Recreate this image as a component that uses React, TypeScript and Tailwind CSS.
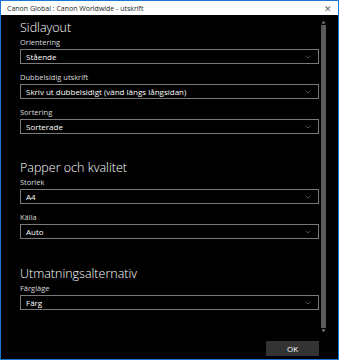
import { ChevronDown } from 'lucide-react';

const font = { fontFamily: '"Open Sans", "Noto Sans", sans-serif' };

function Select({ value }: { value: string }) {
  return (
    <div className="h-[15px] w-[299px] border border-[#7a7a7a] flex items-center justify-between pl-[5px] pr-[6px]">
      <span className="text-[8px] leading-none text-white">{value}</span>
      <ChevronDown size={8} strokeWidth={1.5} className="text-[#9a9a9a]" />
    </div>
  );
}

function Field({ label, value, first }: { label: string; value: string; first?: boolean }) {
  return (
    <div className={first ? 'mt-[1px]' : 'mt-[8px]'}>
      <div className="text-[7.5px] leading-[10px] text-[#dcdcdc] h-[10px]">{label}</div>
      <div className="mt-[2px]">
        <Select value={value} />
      </div>
    </div>
  );
}

function Heading({ children, top }: { children: string; top: string }) {
  return <h2 className={`${top} text-[12.5px] leading-[16px] font-light text-white`}>{children}</h2>;
}

export default function App() {
  return (
    <div style={font} className="w-[339px] h-[360px] border border-[#1a78d0] bg-black flex flex-col overflow-hidden">
      {/* title bar */}
      <div className="h-[14px] bg-white flex items-center justify-between pl-[6px] pr-[6px] shrink-0">
        <span className="text-[7px] text-[#222] leading-none">Canon Global : Canon Worldwide - utskrift</span>
        <span className="text-[9px] text-[#666] leading-none">✕</span>
      </div>

      <div className="flex-1 flex">
        <div className="pl-[19px] pt-[5px] w-[318px] shrink-0 flex flex-col">
          <Heading top="">Sidlayout</Heading>
          <Field first label="Orientering" value="Stående" />
          <Field label="Dubbelsidig utskrift" value="Skriv ut dubbelsidigt (vänd längs långsidan)" />
          <Field label="Sortering" value="Sorterade" />

          <Heading top="mt-[26px]">Papper och kvalitet</Heading>
          <Field first label="Storlek" value="A4" />
          <Field label="Källa" value="Auto" />

          <Heading top="mt-[27px]">Utmatningsalternativ</Heading>
          <Field first label="Färgläge" value="Färg" />

          <div className="mt-auto mb-[3px] flex justify-end">
            <button className="w-[53px] h-[15px] bg-[#333333] text-white text-[8px] leading-none">OK</button>
          </div>
        </div>

        {/* scrollbar */}
        <div className="ml-[2px] mt-[5px] mb-[26px] w-[5px] flex flex-col items-center">
          <svg width="5" height="4" viewBox="0 0 5 4" className="shrink-0">
            <path d="M0.5 3.5 L2.5 1 L4.5 3.5 Z" fill="#8a8a8a" />
          </svg>
          <div className="flex-1 w-[5px] bg-[#5a5a5a] my-[1px]" />
          <svg width="5" height="4" viewBox="0 0 5 4" className="shrink-0">
            <path d="M0.5 0.5 L2.5 3 L4.5 0.5 Z" fill="#8a8a8a" />
          </svg>
        </div>
      </div>
    </div>
  );
}
